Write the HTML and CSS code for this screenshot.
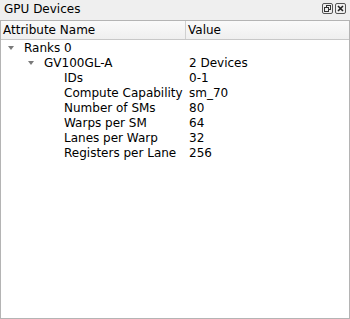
FILE: index.html
```html
<!DOCTYPE html>
<html lang="en">
<head>
    <meta charset="UTF-8">
    <title>GPU Devices</title>
    <link rel="stylesheet" href="styles.css">
</head>
<body>
    <div class="dock">
        <div class="dock-title">
            <span class="title-text">GPU Devices</span>
            <div class="title-buttons">
                <svg class="title-btn" width="11" height="11" viewBox="0 0 11 11">
                    <rect x="0.5" y="0.5" width="10" height="10" rx="1.5" fill="none" stroke="#555"/>
                    <rect x="4.5" y="2.5" width="4" height="4" fill="none" stroke="#333"/>
                    <rect x="2.5" y="4.5" width="4" height="4" fill="#efefef" stroke="#333"/>
                </svg>
                <svg class="title-btn" width="11" height="11" viewBox="0 0 11 11">
                    <rect x="0.5" y="0.5" width="10" height="10" rx="1.5" fill="none" stroke="#555"/>
                    <path d="M3 3 L8 8 M8 3 L3 8" stroke="#222" stroke-width="1.6"/>
                </svg>
            </div>
        </div>

        <div class="tree-view">
            <div class="tree-header">
                <div class="header-cell name-col">Attribute Name</div>
                <div class="header-cell value-col">Value</div>
            </div>

            <div class="tree-body">
                <div class="tree-row level-0">
                    <div class="row-cell name-col"><span class="arrow"></span>Ranks 0</div>
                    <div class="row-cell value-col"></div>
                </div>
                <div class="tree-row level-1">
                    <div class="row-cell name-col"><span class="arrow"></span>GV100GL-A</div>
                    <div class="row-cell value-col">2 Devices</div>
                </div>
                <div class="tree-row level-2">
                    <div class="row-cell name-col">IDs</div>
                    <div class="row-cell value-col">0-1</div>
                </div>
                <div class="tree-row level-2">
                    <div class="row-cell name-col">Compute Capability</div>
                    <div class="row-cell value-col">sm_70</div>
                </div>
                <div class="tree-row level-2">
                    <div class="row-cell name-col">Number of SMs</div>
                    <div class="row-cell value-col">80</div>
                </div>
                <div class="tree-row level-2">
                    <div class="row-cell name-col">Warps per SM</div>
                    <div class="row-cell value-col">64</div>
                </div>
                <div class="tree-row level-2">
                    <div class="row-cell name-col">Lanes per Warp</div>
                    <div class="row-cell value-col">32</div>
                </div>
                <div class="tree-row level-2">
                    <div class="row-cell name-col">Registers per Lane</div>
                    <div class="row-cell value-col">256</div>
                </div>
            </div>
        </div>
    </div>
</body>
</html>
```

FILE: styles.css
```css
body {
    margin: 0;
    font-family: "DejaVu Sans", sans-serif;
    font-size: 12px;
    color: #000;
    background: #efefef;
}

.dock {
    width: 350px;
    height: 319px;
    display: flex;
    flex-direction: column;
}

.dock-title {
    height: 20px;
    display: flex;
    align-items: center;
    justify-content: space-between;
    padding: 0 4px 0 4px;
    background: #efefef;
}

.title-text {
    line-height: 20px;
    margin-top: -2px;
}

.title-buttons {
    display: flex;
    gap: 2px;
    margin-top: -4px;
}

.tree-view {
    flex: 1;
    background: white;
    border: 1px solid #b4b4b4;
    display: flex;
    flex-direction: column;
}

.tree-header {
    display: grid;
    grid-template-columns: 185px 1fr;
    height: 18px;
    background: linear-gradient(#fafafa, #efefef);
    border-bottom: 1px solid #c8c8c8;
}

.header-cell {
    padding-left: 2px;
    line-height: 18px;
}

.header-cell.name-col {
    border-right: 1px solid #d0d0d0;
}

.tree-body {
    padding-top: 1px;
}

.tree-row {
    display: grid;
    grid-template-columns: 186px 1fr;
    height: 15px;
    line-height: 15px;
}

.row-cell {
    white-space: nowrap;
}

.row-cell.value-col {
    padding-left: 2px;
}

.level-0 .name-col {
    padding-left: 23px;
}

.level-1 .name-col {
    padding-left: 43px;
}

.level-2 .name-col {
    padding-left: 63px;
}

.arrow {
    position: relative;
}

.arrow::before {
    content: "";
    position: absolute;
    left: -16px;
    top: 5px;
    border-left: 3.5px solid transparent;
    border-right: 3.5px solid transparent;
    border-top: 4px solid #7a7a7a;
}
```
